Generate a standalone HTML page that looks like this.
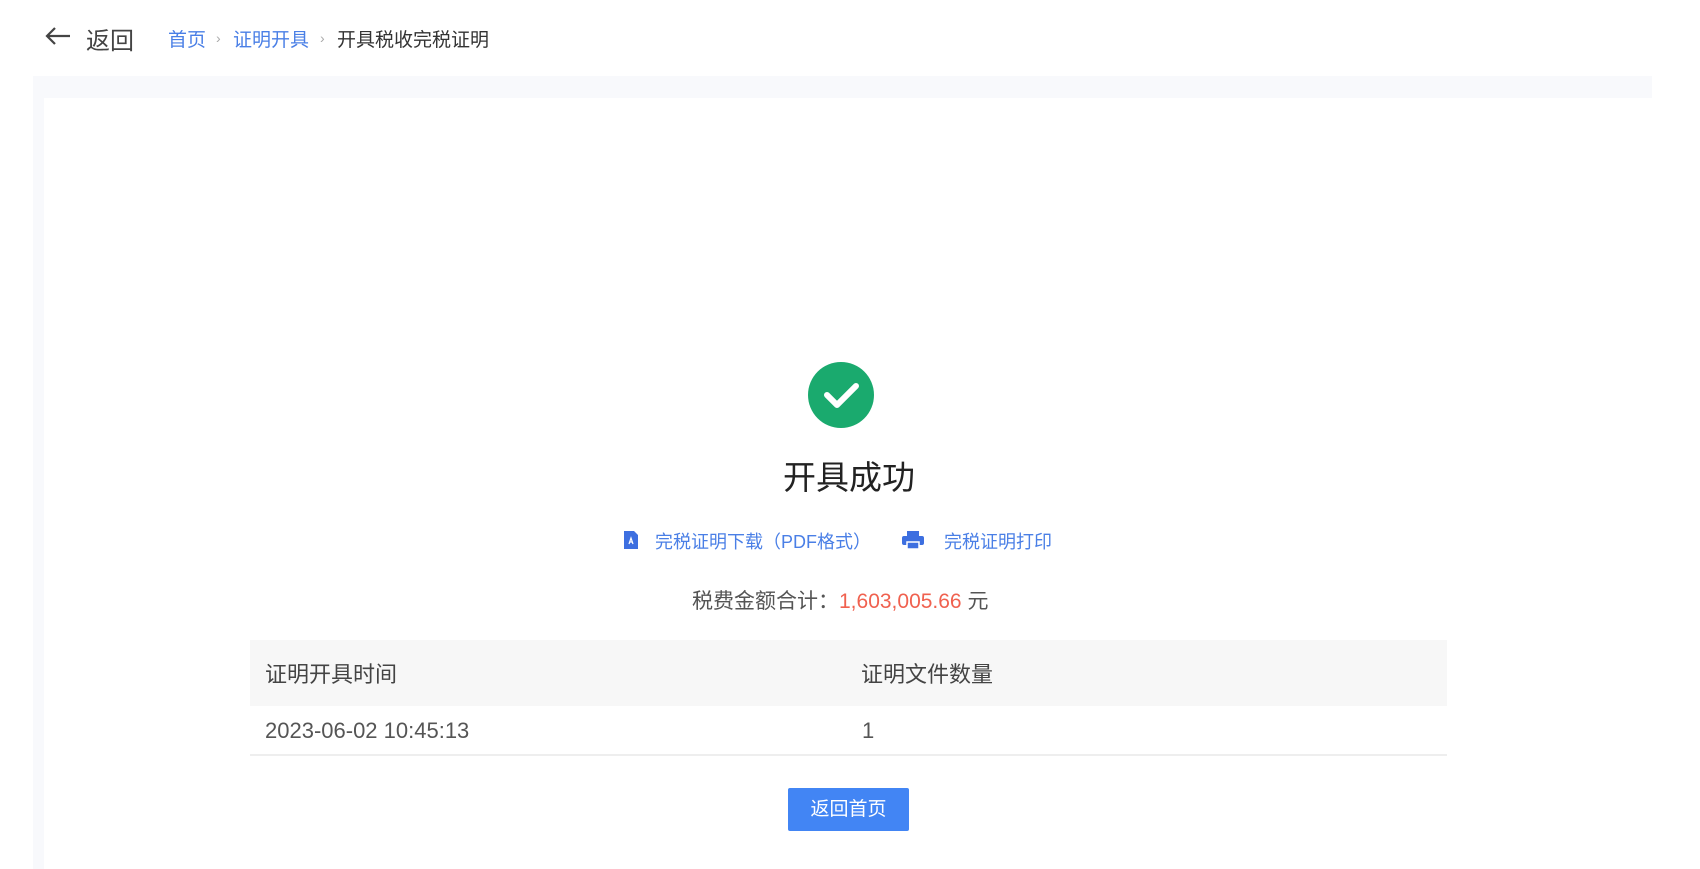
<!DOCTYPE html>
<html><head><meta charset="utf-8"><style>
*{margin:0;padding:0;box-sizing:border-box}
body{width:1700px;height:869px;background:#fff;font-family:"Liberation Sans","Noto Sans CJK SC",sans-serif;position:relative;overflow:hidden;color:#333}
.abs{position:absolute;white-space:nowrap}
</style></head><body>
<svg class="abs" style="left:44px;top:25px" width="28" height="22" viewBox="0 0 28 22"><path d="M26 11H3M11 3L3 11l8 8" fill="none" stroke="#444" stroke-width="2.2"/></svg>
<div class="abs" style="left:86px;top:21px;font-size:24px;color:#444">返回</div>
<div class="abs" style="left:168px;top:25px;font-size:19px;color:#4a7fe6">首页</div>
<div class="abs" style="left:216px;top:30px;font-size:14px;color:#aaa">›</div>
<div class="abs" style="left:233px;top:25px;font-size:19px;color:#4a7fe6">证明开具</div>
<div class="abs" style="left:320px;top:30px;font-size:14px;color:#aaa">›</div>
<div class="abs" style="left:337px;top:25px;font-size:19px;color:#333">开具税收完税证明</div>
<div class="abs" style="left:33px;top:76px;width:1619px;height:22px;background:#f8f9fc"></div>
<div class="abs" style="left:33px;top:98px;width:11px;height:771px;background:#f8f9fc"></div>
<svg class="abs" style="left:808px;top:362px" width="66" height="66" viewBox="0 0 66 66"><circle cx="33" cy="33" r="33" fill="#1aaa6e"/><path d="M19 33l10 10 19-19" fill="none" stroke="#fff" stroke-width="6" stroke-linecap="round" stroke-linejoin="round"/></svg>
<div class="abs" style="left:-1px;width:1700px;text-align:center;top:451px;font-size:33px;color:#222">开具成功</div>
<svg class="abs" style="left:623px;top:530px" width="16" height="20" viewBox="0 0 16 20"><path d="M1 1h10l4 4v14H1z" fill="#3d6fe0"/><path d="M6 14l2-6 2 6M7 12h2" stroke="#fff" stroke-width="1.2" fill="none"/></svg>
<div class="abs" style="left:655px;top:528px;font-size:18px;color:#4a7fe6">完税证明下载（PDF格式）</div>
<svg class="abs" style="left:902px;top:531px" width="22" height="18" viewBox="0 0 22 18"><rect x="5" y="0" width="12" height="5" fill="#3d6fe0"/><rect x="0" y="5" width="22" height="9" rx="2" fill="#3d6fe0"/><rect x="5" y="11" width="12" height="7" fill="#3d6fe0" stroke="#fff" stroke-width="1.5"/></svg>
<div class="abs" style="left:944px;top:528px;font-size:18px;color:#4a7fe6">完税证明打印</div>
<div class="abs" style="left:692px;top:585px;font-size:21px;color:#555">税费金额合计：<span style="color:#f0614f">1,603,005.66</span> 元</div>
<div class="abs" style="left:250px;top:640px;width:1197px;height:66px;background:#f7f7f7"></div>
<div class="abs" style="left:265px;top:657px;font-size:22px;color:#444">证明开具时间</div>
<div class="abs" style="left:861px;top:657px;font-size:22px;color:#444">证明文件数量</div>
<div class="abs" style="left:265px;top:718px;font-size:22px;color:#555">2023-06-02 10:45:13</div>
<div class="abs" style="left:862px;top:718px;font-size:22px;color:#555">1</div>
<div class="abs" style="left:250px;top:754px;width:1197px;height:2px;background:#eee"></div>
<div class="abs" style="left:788px;top:788px;width:121px;height:43px;background:#4285f4;color:#fff;font-size:19px;text-align:center;line-height:43px;border-radius:2px">返回首页</div>
</body></html>
